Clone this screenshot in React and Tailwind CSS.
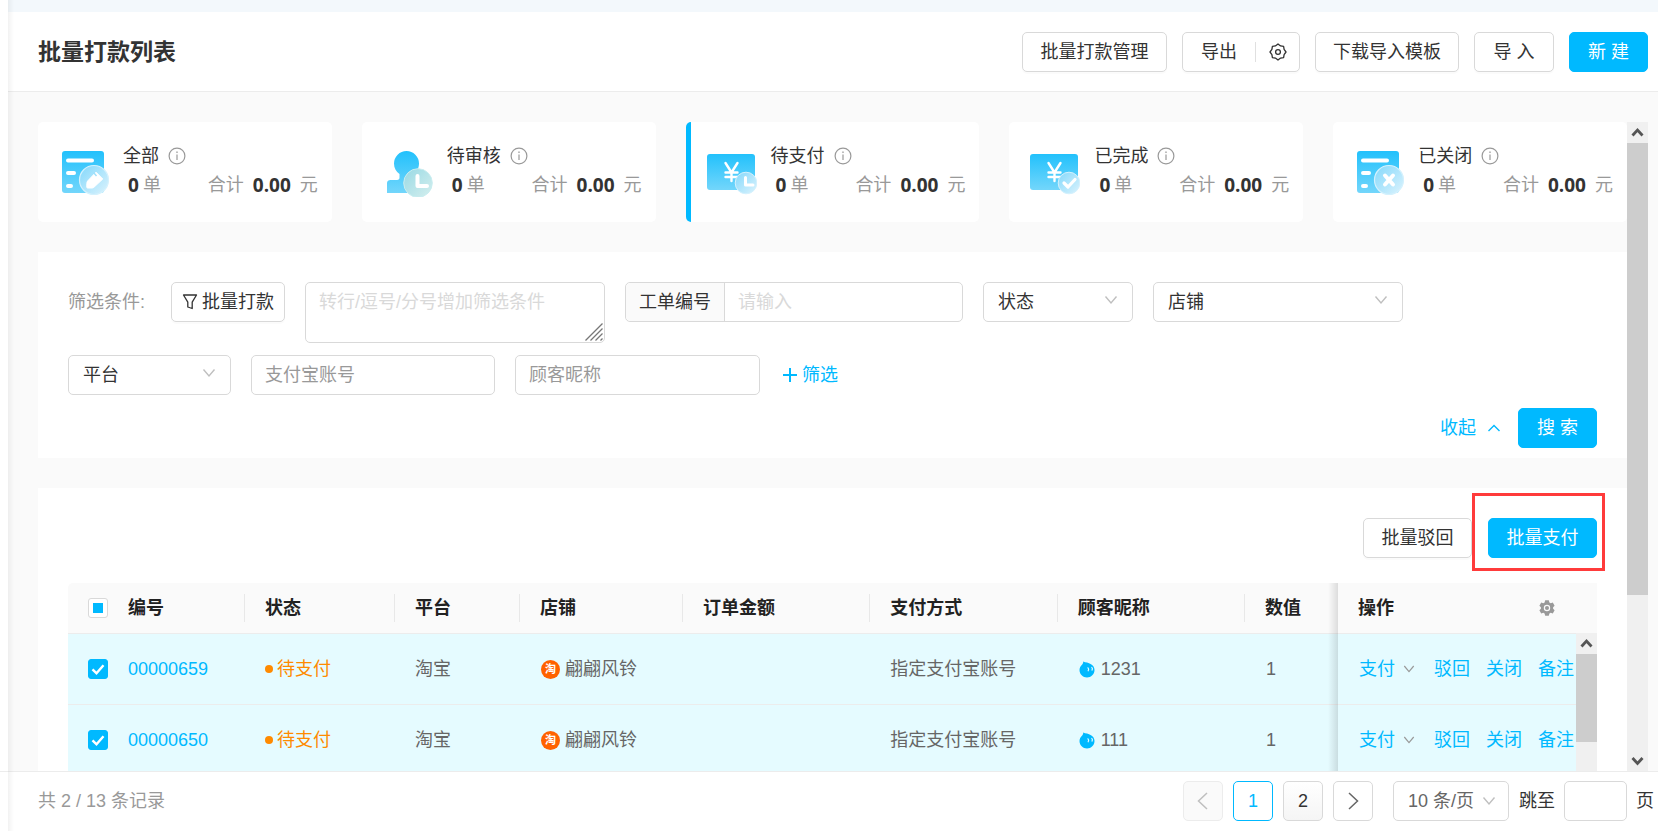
import React from "react";

const FONT = "font-['Liberation_Sans','Noto_Sans_CJK_SC',sans-serif]";

function Grad({ id, from, to }) {
  return (
    <linearGradient id={id} x1="0" y1="0" x2="0" y2="1">
      <stop offset="0" stopColor={from} />
      <stop offset="1" stopColor={to} />
    </linearGradient>
  );
}

function CardIcon({ kind }) {
  const id = "g-" + kind;
  const main = `url(#${id})`;
  const soft = `url(#${id}-b)`;
  return (
    <svg width="50" height="50" viewBox="0 0 50 50" fill="none" aria-hidden="true" className="shrink-0">
      <defs>
        <Grad id={id} from="#22c1fc" to="#73d6fb" />
        <linearGradient id={id + "-b"} x1="0" y1="0" x2="1" y2="1">
          <stop offset="0" stopColor={kind === "review" ? "#98d9e4" : "#83d8fb"} />
          <stop offset="1" stopColor={kind === "review" ? "#d5efee" : "#dcf3fd"} />
        </linearGradient>
      </defs>
      {(kind === "all" || kind === "closed") && (
        <>
          <rect x="3" y="4" width="42" height="42" rx="3" fill={main} />
          <path d="M9 13.500h24M9 26h6M9 39h3" stroke="#fff" strokeWidth="4" strokeLinecap="round" />
          <circle cx="35" cy="33" r="14.500" fill={soft} stroke="#d4f1fd" strokeWidth="1.200" />
          {kind === "all" ? (
            <>
              <path d="M37 25.200L43.800 32L35 40.200Q34.300 41 33 41H28.500Q27.800 41 27.800 40.200V36.500Q27.800 35 28.800 33.800Z" fill="#fff" stroke="#fff" strokeLinejoin="round" />
              <path d="M34.500 25.500L37.500 29" stroke="#9fe0fb" strokeWidth="1.400" />
            </>
          ) : (
            <path d="M31 28.500l8 9M39 28.500l-8 9" stroke="#fff" strokeWidth="4" strokeLinecap="round" />
          )}
        </>
      )}
      {kind === "review" && (
        <>
          <path d="M23.500 4a12.500 12.500 0 0 1 12.500 12.500c0 5-2.500 8.500-5 10.500v6h10v13H4V36c0-2 1.500-3 3.500-3H14c1.800 0 2.500-1 2.500-2.500V27c-3.500-2.500-5.500-6-5.500-10.500A12.500 12.500 0 0 1 23.500 4z" fill={main} />
          <circle cx="35" cy="36" r="14.300" fill={soft} stroke="#c9edf0" strokeWidth="1" />
          <path d="M34.500 29v10H44" stroke="#fff" strokeWidth="4" strokeLinecap="round" strokeLinejoin="round" />
        </>
      )}
      {(kind === "pay" || kind === "done") && (
        <>
          <rect x="0" y="7" width="48" height="36" rx="3" fill={main} />
          <path d="M18.500 16l6 9.500L30.500 16M24.500 25.500V34M18.500 25.500h12M18.500 30h12" stroke="#fff" strokeWidth="2.400" strokeLinecap="round" />
          <circle cx="39" cy="36" r="10.800" fill={soft} stroke="#d4f1fd" strokeWidth="1" />
          {kind === "pay" ? (
            <path d="M38.500 30.500v7.500H46" stroke="#fff" strokeWidth="3" strokeLinecap="round" strokeLinejoin="round" />
          ) : (
            <path d="M34 36l4 4 7-7.500" stroke="#fff" strokeWidth="3.200" strokeLinecap="round" strokeLinejoin="round" />
          )}
        </>
      )}
    </svg>
  );
}

function InfoIcon() {
  return (
    <svg width="18" height="18" viewBox="0 0 18 18" fill="none" stroke="#999" strokeWidth="1.200" aria-hidden="true">
      <circle cx="9" cy="9" r="7.900" />
      <path d="M9 7.600V13" />
      <circle cx="9" cy="5.200" r="0.600" fill="#999" strokeWidth="0.400" />
    </svg>
  );
}

function Chevron({ className = "text-[#bfbfbf]", up = false, size = 14 }) {
  return (
    <svg width={size} height={size} viewBox="0 0 14 14" fill="none" stroke="currentColor" strokeWidth="1.400" aria-hidden="true" className={className}>
      <path d={up ? "M1.500 10L7 4.500L12.500 10" : "M1.500 3.500L7 10L12.500 3.500"} />
    </svg>
  );
}

function ScrollArrow({ up }) {
  return (
    <svg width="21" height="21" viewBox="0 0 21 21" fill="none" stroke="#555" strokeWidth="2.800" aria-hidden="true" className="shrink-0">
      <path d={up ? "M5.500 13.500L10.500 8L15.500 13.500" : "M5.500 8L10.500 13.500L15.500 8"} />
    </svg>
  );
}

function GearOutline() {
  return (
    <svg width="18" height="18" viewBox="0 0 18 18" fill="none" stroke="#333" strokeWidth="1.300" strokeLinejoin="round" aria-hidden="true">
      <path d="M9 1L11.600 2.900L14.600 3.400L15.100 6.400L17 9L15.100 11.600L14.600 14.600L11.600 15.100L9 17L6.400 15.100L3.400 14.600L2.900 11.600L1 9L2.900 6.400L3.400 3.400L6.400 2.900Z" />
      <circle cx="9" cy="9" r="2.400" />
    </svg>
  );
}

function GearSolid() {
  return (
    <svg width="16" height="16" viewBox="0 0 16 16" aria-hidden="true">
      <path fill="#999" fillRule="evenodd" d="M6.200 0.300h3.600l.6 2.100 1.300.8 2.100-.6 1.800 3.100-1.500 1.500v1.600l1.500 1.500-1.800 3.100-2.100-.6-1.300.8-.6 2.100H6.200l-.6-2.100-1.300-.8-2.100.6L.4 10.300l1.500-1.500V7.200L.4 5.700l1.800-3.100 2.100.6 1.300-.8zM8 4.800a3.200 3.200 0 1 0 0 6.400 3.200 3.200 0 0 0 0-6.400z" />
      <circle cx="8" cy="8" r="2" fill="#999" />
    </svg>
  );
}

function FunnelIcon() {
  return (
    <svg width="16" height="18" viewBox="0 0 16 18" fill="none" stroke="#333" strokeWidth="1.300" strokeLinejoin="round" aria-hidden="true">
      <path d="M1.500 2h13L10.200 9.200V15.500L5.800 14V9.200z" />
    </svg>
  );
}

function DropIcon() {
  return (
    <svg width="16" height="17" viewBox="0 0 16 17" aria-hidden="true">
      <path fill="#00b9ff" d="M4.200.5C6.500 1.600 9.500 1.500 12 3.200c2 1 3.500 3.300 3.500 5.800 0 4.200-3.400 7.500-7.500 7.500S.5 13.200.5 9c0-2.200 1-4.200 2.700-5.600C4 2.600 4.300 1.600 4.200.5z" />
      <path d="M9 6.800q1.200 1.300.2 3M12.800 6.300q1.200 1.200.2 2.800" fill="none" stroke="#e5fbff" strokeWidth="1.200" strokeLinecap="round" />
    </svg>
  );
}

function Button({ children, primary, className = "" }) {
  const tone = primary
    ? "border-[#00b9ff] bg-[#00b9ff] text-white"
    : "border-[#d9d9d9] bg-white text-[#333] shadow-[0_2px_0_rgba(0,0,0,0.016)]";
  return (
    <button type="button" className={`flex h-10 shrink-0 items-center justify-center rounded-[5px] border whitespace-nowrap ${tone} ${className}`}>
      {children}
    </button>
  );
}

const CARDS = [
  { kind: "all", label: "全部" },
  { kind: "review", label: "待审核" },
  { kind: "pay", label: "待支付", active: true },
  { kind: "done", label: "已完成" },
  { kind: "closed", label: "已关闭" },
];

function StatCard({ kind, label, active }) {
  return (
    <section className={`flex h-[100px] min-w-0 items-start rounded-[5px] bg-white pr-[14px] ${active ? "border-l-[5px] border-[#00b9ff] pl-4" : "pl-[21px]"}`}>
      <div className="mt-[25px] shrink-0">
        <CardIcon kind={kind} />
      </div>
      <div className="mt-[19px] ml-[14px] min-w-0 flex-1 whitespace-nowrap">
        <div className="flex h-[29px] items-center gap-[9px] text-[#333]">
          {label}
          <InfoIcon />
        </div>
        <div className="flex h-[30px] items-center justify-between pl-[5px] text-[#999]">
          <span className="flex items-center gap-1">
            <b className="font-['Open_Sans',sans-serif] text-[19px] font-bold text-[#333]">0</b>单
          </span>
          <span className="flex items-center gap-[9px]">
            合计<b className="font-['Open_Sans',sans-serif] text-[19px] font-bold text-[#333]">0.00</b>元
          </span>
        </div>
      </div>
    </section>
  );
}

function Select({ label, className }) {
  return (
    <div className={`relative h-10 shrink-0 ${className}`}>
      <select aria-label={label} className="h-full w-full appearance-none rounded-[5px] border border-[#d9d9d9] bg-white px-[14px] text-[#333]">
        <option>{label}</option>
      </select>
      <Chevron className="pointer-events-none absolute top-[11px] right-[15px] text-[#bfbfbf]" />
    </div>
  );
}

function TextInput({ label, className }) {
  return (
    <input type="text" aria-label={label} placeholder={label} className={`h-10 rounded-[5px] border border-[#d9d9d9] bg-white px-[13px] placeholder:text-[#999] ${className}`} />
  );
}

function Filters() {
  return (
    <section className="mt-[30px] bg-white px-[30px] pt-[30px] pb-[10px]">
      <div className="flex items-start gap-5">
        <span className="flex h-10 w-[83px] items-center whitespace-nowrap text-[#999]">筛选条件:</span>
        <button type="button" className="flex h-10 w-[114px] items-center justify-center gap-1 rounded-[5px] border border-[#d9d9d9] whitespace-nowrap text-[#333] shadow-[0_2px_0_rgba(0,0,0,0.016)]">
          <FunnelIcon />
          批量打款
        </button>
        <div className="relative h-[61px] w-[300px]">
          <textarea aria-label="批量筛选条件" placeholder="转行/逗号/分号增加筛选条件" className="block h-full w-full resize-none rounded-[5px] border border-[#d9d9d9] px-[13px] pt-[6px] leading-[26px] placeholder:text-[#d9d9d9]" />
          <svg width="18" height="18" viewBox="0 0 18 18" fill="none" stroke="#777" strokeWidth="1.300" aria-hidden="true" className="pointer-events-none absolute right-[2px] bottom-[2px]">
            <path d="M0.500 17.500L17.500 0.500M5.500 17.500L17.500 5.500M10.500 17.500L17.500 10.500M15.500 17.500L17.500 15.500" />
          </svg>
        </div>
        <div className="flex h-10 w-[338px] rounded-[5px] border border-[#d9d9d9]">
          <label htmlFor="order-no" className="flex w-[99px] shrink-0 items-center justify-center rounded-l-[5px] border-r border-[#d9d9d9] bg-[#fafafa] text-[#333]">工单编号</label>
          <input id="order-no" type="text" placeholder="请输入" className="min-w-0 flex-1 rounded-r-[5px] px-[13px] placeholder:text-[#d9d9d9]" />
        </div>
        <Select label="状态" className="w-[150px]" />
        <Select label="店铺" className="w-[250px]" />
      </div>
      <div className="mt-3 flex gap-5">
        <Select label="平台" className="w-[163px]" />
        <TextInput label="支付宝账号" className="w-[244px]" />
        <TextInput label="顾客昵称" className="w-[245px]" />
        <button type="button" className="flex h-10 items-center gap-1 pl-[2px] text-[#00b9ff]">
          <svg width="16" height="16" viewBox="0 0 16 16" stroke="currentColor" strokeWidth="2" aria-hidden="true"><path d="M8 1v14M1 8h14" /></svg>
          筛选
        </button>
      </div>
      <div className="mt-[13px] flex items-center justify-end">
        <button type="button" className="mr-[17px] flex items-center gap-[11px] text-[#00b9ff]">
          收起
          <Chevron up className="text-[#00b9ff]" />
        </button>
        <Button primary className="w-[79px]">搜 索</Button>
      </div>
    </section>
  );
}

const ROWS = [
  { no: "00000659", nick: "1231" },
  { no: "00000650", nick: "111" },
];

const HEADS = ["编号", "状态", "平台", "店铺", "订单金额", "支付方式", "顾客昵称", "数值"];

function Check({ mixed, label }) {
  return (
    <span className="relative block size-5">
      <input
        type="checkbox"
        aria-label={label}
        defaultChecked={!mixed}
        className={`block size-5 appearance-none rounded-[3px] border ${mixed ? "border-[#d9d9d9] bg-white" : "border-[#00b9ff] bg-[#00b9ff]"}`}
      />
      {mixed ? (
        <span className="pointer-events-none absolute inset-[5px] bg-[#00b9ff]" />
      ) : (
        <svg width="20" height="20" viewBox="0 0 20 20" fill="none" stroke="#fff" strokeWidth="2.400" aria-hidden="true" className="pointer-events-none absolute inset-0">
          <path d="M4.500 10.300L8.500 14.300L15.500 6.300" />
        </svg>
      )}
    </span>
  );
}

function DataTable() {
  return (
    <div className="relative mt-[25px]">
      <table className="w-full table-fixed border-separate border-spacing-0 text-left whitespace-nowrap text-[#666]">
        <colgroup>
          <col className="w-[40px]" />
          <col className="w-[137px]" />
          <col className="w-[150px]" />
          <col className="w-[125px]" />
          <col className="w-[163px]" />
          <col />
          <col />
          <col />
          <col className="w-[93px]" />
          <col className="w-[259px]" />
        </colgroup>
        <thead>
          <tr className="h-[51px] bg-[#fafafa] text-[#222]">
            <th className="rounded-tl-[5px] border-b border-[#ececec] pl-5"><Check mixed label="全选" /></th>
            {HEADS.map((h, i) => (
              <th key={h} className="border-b border-[#ececec] py-0 font-bold">
                <div className={`flex h-7 items-center pl-5 ${i < 7 ? "border-r border-[#e8e8e8]" : ""}`}>{h}</div>
              </th>
            ))}
            <th className="border-b border-[#ececec] font-bold">
              <div className="flex items-center justify-between pr-[42px] pl-5">
                操作
                <button type="button" aria-label="列设置"><GearSolid /></button>
              </div>
            </th>
          </tr>
        </thead>
        <tbody>
          {ROWS.map((r) => (
            <tr key={r.no} className="h-[71px] bg-[#e5fbff]">
              <td className="border-b border-[#ececec] pl-5"><Check label={"选择 " + r.no} /></td>
              <td className="border-b border-[#ececec] pl-5"><a href="#order" className="text-[#00b9ff]">{r.no}</a></td>
              <td className="border-b border-[#ececec] pl-5 text-[#ff8a00]">
                <span className="flex items-center gap-1"><i className="size-2 rounded-full bg-[#ff8a00]" />待支付</span>
              </td>
              <td className="border-b border-[#ececec] pl-5">淘宝</td>
              <td className="border-b border-[#ececec] pl-[21px]">
                <span className="flex items-center gap-[5px]">
                  <span className="flex size-[19px] items-center justify-center rounded-full bg-[#ff6200] text-[11px] font-bold text-white">淘</span>
                  翩翩风铃
                </span>
              </td>
              <td className="border-b border-[#ececec]" />
              <td className="border-b border-[#ececec] pl-5">指定支付宝账号</td>
              <td className="border-b border-[#ececec] pl-[21px]">
                <span className="flex items-center gap-[6px]"><DropIcon />{r.nick}</span>
              </td>
              <td className="border-b border-[#ececec] pl-[21px]">1</td>
              <td className="border-b border-[#ececec] pl-[21px]">
                <span className="flex items-center gap-4 text-[#00b9ff]">
                  <button type="button" className="flex items-center gap-2 pr-[3px]">支付<Chevron className="text-[#999]" size={12} /></button>
                  <button type="button">驳回</button>
                  <button type="button">关闭</button>
                  <button type="button">备注</button>
                </span>
              </td>
            </tr>
          ))}
        </tbody>
      </table>
      <div className="pointer-events-none absolute inset-y-0 right-[259px] w-[10px] bg-linear-to-l from-black/12 to-transparent" />
      <div className="absolute top-[50px] right-0 bottom-0 flex w-[21px] flex-col bg-[#f0f0f0]">
        <ScrollArrow up />
        <div className="h-[88px] bg-[#cdcdcd]" />
      </div>
    </div>
  );
}

function PageButton({ children, className, label }) {
  return (
    <button type="button" aria-label={label} className={`flex size-10 items-center justify-center rounded-[5px] border ${className}`}>
      {children}
    </button>
  );
}

function Footer() {
  return (
    <footer className="flex h-[60px] shrink-0 items-center border-t border-[#ececec] bg-white pr-1 pb-px pl-[30px] whitespace-nowrap">
      <span className="mr-auto text-[#999]">共 2 / 13 条记录</span>
      <nav aria-label="分页" className="flex gap-[10px]">
        <PageButton label="上一页" className="border-[#ececec] bg-[#fafafa] text-[#bfbfbf]">
          <svg width="20" height="20" viewBox="0 0 20 20" fill="none" stroke="currentColor" strokeWidth="1.500"><path d="M14 2L5.500 10L14 18" /></svg>
        </PageButton>
        <PageButton className="border-[#00b9ff] bg-white text-[#00b9ff]">1</PageButton>
        <PageButton className="border-[#d9d9d9] bg-linear-to-b from-white to-[#f5f5f5] text-[#333]">2</PageButton>
        <PageButton label="下一页" className="border-[#d9d9d9] bg-white text-[#666]">
          <svg width="20" height="20" viewBox="0 0 20 20" fill="none" stroke="currentColor" strokeWidth="1.500"><path d="M6 2L14.500 10L6 18" /></svg>
        </PageButton>
      </nav>
      <div className="relative ml-5 h-10 w-[116px]">
        <select aria-label="每页条数" className="h-full w-full appearance-none rounded-[5px] border border-[#d9d9d9] bg-white pl-[14px] text-[#666]">
          <option>10 条/页</option>
        </select>
        <Chevron className="pointer-events-none absolute top-[13px] right-[13px] text-[#bfbfbf]" />
      </div>
      <label htmlFor="jump" className="ml-[10px] text-[#333]">跳至</label>
      <input id="jump" type="text" className="mx-[9px] h-10 w-[63px] rounded-[5px] border border-[#d9d9d9]" />
      <span className="text-[#333]">页</span>
    </footer>
  );
}

export default function App() {
  return (
    <div className={`flex h-screen bg-white text-[18px] leading-[26px] ${FONT}`}>
      <div className="flex w-2 shrink-0 flex-col justify-end">
        <div className="h-[60px] border-t border-[#ececec]" />
      </div>
      <div className="relative flex min-w-0 flex-1 flex-col bg-[#fafafa]">
        <div className="h-3 shrink-0 bg-[#f3f8fc]" />
        <header className="flex h-20 shrink-0 items-center justify-between border-b border-[#ececec] bg-white pr-[10px] pl-[30px]">
          <h1 className="text-[23px] font-bold text-[#333]">批量打款列表</h1>
          <div className="flex gap-[15px]">
            <Button className="w-[145px]">批量打款管理</Button>
            <div className="flex h-10 w-[118px] items-center rounded-[5px] border border-[#d9d9d9] bg-white text-[#333] shadow-[0_2px_0_rgba(0,0,0,0.016)]">
              <button type="button" className="flex-1">导出</button>
              <span className="h-5 w-px bg-[#e0e0e0]" />
              <button type="button" aria-label="导出设置" className="flex h-full w-[43px] items-center justify-center"><GearOutline /></button>
            </div>
            <Button className="w-[144px]">下载导入模板</Button>
            <Button className="w-[80px]">导 入</Button>
            <Button primary className="w-[79px]">新 建</Button>
          </div>
        </header>
        <div className="flex min-h-0 flex-1 pt-[30px] pr-[10px] pl-[30px]">
          <main className="min-w-0 flex-1 overflow-hidden">
            <div className="grid grid-cols-5 gap-[30px]">
              {CARDS.map((c) => <StatCard key={c.kind} {...c} />)}
            </div>
            <Filters />
            <section className="mt-[30px] bg-white px-[30px] pt-[30px]">
              <div className="flex justify-end gap-4">
                <Button className="w-[109px]">批量驳回</Button>
                <div className="relative">
                  <Button primary className="w-[109px]">批量支付</Button>
                  <div className="pointer-events-none absolute -top-[25px] -right-2 -bottom-[13px] -left-4 border-[3px] border-[#ff3b3b]" />
                </div>
              </div>
              <DataTable />
            </section>
          </main>
          <div className="flex w-[21px] shrink-0 flex-col bg-[#f0f0f0]">
            <ScrollArrow up />
            <div className="h-[452px] bg-[#cdcdcd]" />
            <div className="mt-auto"><ScrollArrow /></div>
          </div>
        </div>
        <Footer />
        <div className="pointer-events-none absolute inset-y-0 left-0 w-[6px] bg-linear-to-r from-black/5 to-transparent" />
      </div>
    </div>
  );
}
